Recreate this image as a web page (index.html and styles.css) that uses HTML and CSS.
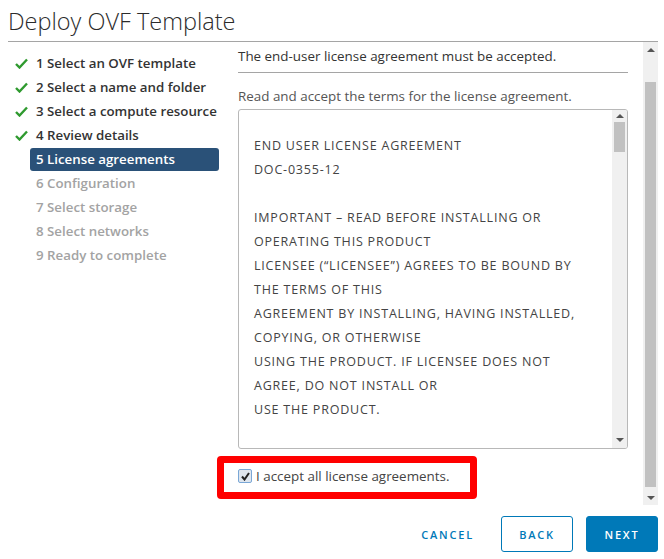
FILE: index.html
```html
<!DOCTYPE html>
<html>
<head>
<meta charset="utf-8">
<link rel="stylesheet" href="styles.css">
</head>
<body>
<div class="dialog">
  <h1 class="title">Deploy OVF Template</h1>
  <div class="main">
    <nav class="nav">
      <div class="step done"><span class="ico"><svg width="13" height="11" viewBox="0 0 13 11"><path d="M1 6 L4.5 9.5 L12 1.5" fill="none" stroke="#2f9a2f" stroke-width="2.4"/></svg></span><span class="label">1 Select an OVF template</span></div>
      <div class="step done"><span class="ico"><svg width="13" height="11" viewBox="0 0 13 11"><path d="M1 6 L4.5 9.5 L12 1.5" fill="none" stroke="#2f9a2f" stroke-width="2.4"/></svg></span><span class="label">2 Select a name and folder</span></div>
      <div class="step done"><span class="ico"><svg width="13" height="11" viewBox="0 0 13 11"><path d="M1 6 L4.5 9.5 L12 1.5" fill="none" stroke="#2f9a2f" stroke-width="2.4"/></svg></span><span class="label">3 Select a compute resource</span></div>
      <div class="step done"><span class="ico"><svg width="13" height="11" viewBox="0 0 13 11"><path d="M1 6 L4.5 9.5 L12 1.5" fill="none" stroke="#2f9a2f" stroke-width="2.4"/></svg></span><span class="label">4 Review details</span></div>
      <div class="step active"><span class="ico"></span><span class="label">5 License agreements</span></div>
      <div class="step todo"><span class="ico"></span><span class="label">6 Configuration</span></div>
      <div class="step todo"><span class="ico"></span><span class="label">7 Select storage</span></div>
      <div class="step todo"><span class="ico"></span><span class="label">8 Select networks</span></div>
      <div class="step todo"><span class="ico"></span><span class="label">9 Ready to complete</span></div>
    </nav>
    <section class="pane">
      <div class="pane-body">
        <p class="notice">The end-user license agreement must be accepted.</p>
        <p class="intro">Read and accept the terms for the license agreement.</p>
        <div class="eula">
          <div class="eula-text">
            <p>END USER LICENSE AGREEMENT</p>
            <p>DOC-0355-12</p>
            <p>&nbsp;</p>
            <p>IMPORTANT – READ BEFORE INSTALLING OR</p>
            <p>OPERATING THIS PRODUCT</p>
            <p>LICENSEE (“LICENSEE”) AGREES TO BE BOUND BY</p>
            <p>THE TERMS OF THIS</p>
            <p>AGREEMENT BY INSTALLING, HAVING INSTALLED,</p>
            <p>COPYING, OR OTHERWISE</p>
            <p>USING THE PRODUCT. IF LICENSEE DOES NOT</p>
            <p>AGREE, DO NOT INSTALL OR</p>
            <p>USE THE PRODUCT.</p>
          </div>
          <div class="sbar inner">
            <span class="arrow up"></span>
            <span class="thumb"></span>
            <span class="arrow down"></span>
          </div>
        </div>
        <div class="highlight">
          <label class="accept"><span class="cb"><svg width="9" height="9" viewBox="0 0 9 9"><path d="M1 4.5 L3.5 7.5 L8 1" fill="none" stroke="#222" stroke-width="2"/></svg></span>I accept all license agreements.</label>
        </div>
      </div>
      <div class="sbar outer">
        <span class="arrow up"></span>
        <span class="thumb"></span>
        <span class="arrow down"></span>
      </div>
    </section>
  </div>
  <footer class="footer">
    <button class="btn link">CANCEL</button>
    <button class="btn outline">BACK</button>
    <button class="btn primary">NEXT</button>
  </footer>
</div>
</body>
</html>
```
FILE: styles.css
```css
* { box-sizing: border-box; }
html, body { margin: 0; padding: 0; background: #fff; }
body {
  width: 664px; height: 559px; overflow: hidden;
  font-family: "Open Sans", "Noto Sans", sans-serif;
  color: #333;
}
.dialog { display: flex; flex-direction: column; height: 559px; }
.title {
  margin: 0 6px 0 8px;
  height: 42px;
  font-size: 23.5px; font-weight: 300; line-height: 42px;
  color: #2b2b2b;
  border-bottom: 1px solid #a5a5a5;
}
.main { display: flex; height: 463px; }
.nav { width: 230px; padding: 9px 0 0 8px; flex: none; }
.step { display: flex; align-items: center; height: 24px; font-size: 13.3px; font-weight: 600; }
.ico { width: 22px; flex: none; display: flex; padding-left: 7px; }
.label { display: block; flex: 1; padding-left: 6px; line-height: 23px; height: 23px; border-radius: 3px; white-space: nowrap; margin-right: 11px; }
.done .label { color: #333; }
.active .label { background: #2a5178; color: #fff; }
.todo .label { color: #a3a3a3; }
.pane { flex: 1; display: flex; margin-right: 6px; }
.pane-body { flex: 1; padding: 0 15px 0 8px; }
.notice { margin: 0; padding-top: 6px; height: 31px; font-size: 13.4px; line-height: 16px; border-bottom: 1px solid #a5a5a5; color: #333; }
.intro { margin: 0; padding-top: 15px; height: 36px; font-size: 13.4px; line-height: 16px; color: #555; }
.eula { height: 340px; border: 1px solid #b8b8b8; border-radius: 3px; display: flex; overflow: hidden; }
.eula-text { flex: 1; padding: 24px 0 0 15px; font-size: 12.5px; line-height: 24px; color: #444; letter-spacing: 0.8px; }
.eula-text p { margin: 0; white-space: nowrap; }
.sbar { width: 15px; background: #f0f0f0; display: flex; flex-direction: column; align-items: center; flex: none; }
.sbar .arrow { width: 0; height: 0; border-left: 4px solid transparent; border-right: 4px solid transparent; }
.sbar .arrow.up { border-bottom: 4px solid #555; }
.sbar .arrow.down { border-top: 4px solid #555; }
.inner { padding: 4px 0 6px; }
.inner .thumb { width: 11px; height: 30px; background: #c1c1c1; margin: 4px 0 0; }
.inner .arrow.down { margin-top: auto; }
.outer { height: 463px; padding: 6px 0 5px; }
.outer .thumb { width: 11px; height: 405px; background: #c1c1c1; margin-top: 30px; }
.outer .arrow.down { margin-top: auto; }
.highlight { margin: 7px 0 0 -21px; width: 260px; height: 43px; border: 7px solid #ff0000; border-radius: 4px; display: flex; align-items: flex-start; padding: 4px 0 0 14px; }
.accept { display: flex; align-items: center; font-size: 13.4px; color: #444; line-height: 18px; }
.cb { width: 14px; height: 14px; border: 1px solid #7aa7d6; background: #dfe6ee; border-radius: 2px; margin-right: 4px; display: flex; align-items: center; justify-content: center; }
.footer { display: flex; justify-content: flex-end; align-items: center; padding: 11px 6px 0 0; gap: 13px; }
.btn { font-family: inherit; height: 36px; font-size: 11px; font-weight: 600; letter-spacing: 1.8px; border-radius: 3px; cursor: pointer; }
.btn.link { background: none; border: none; color: #0079b8; padding: 0 14px; }
.btn.outline { width: 72px; background: #fff; border: 1px solid #0079b8; color: #0079b8; }
.btn.primary { width: 72px; background: #0079b8; border: 1px solid #0079b8; color: #fff; }
```
